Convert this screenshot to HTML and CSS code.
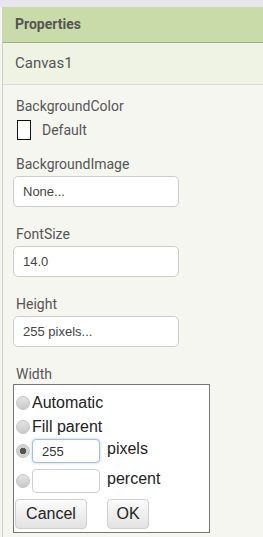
FILE: index.html
```html
<!DOCTYPE html>
<html lang="en">
<head>
    <meta charset="UTF-8">
    <meta name="viewport" content="width=device-width, initial-scale=1.0">
    <title>Properties</title>
    <link rel="stylesheet" href="styles.css">
</head>
<body>
    <div class="topbar"></div>
    <div class="panel">
        <div class="panel-head">Properties</div>
        <div class="component-name">Canvas1</div>
        <div class="props">
            <div class="prop prop-color">
                <div class="prop-label">BackgroundColor</div>
                <div class="color-row">
                    <span class="swatch"></span>
                    <span class="color-name">Default</span>
                </div>
            </div>
            <div class="prop">
                <div class="prop-label">BackgroundImage</div>
                <div class="field">None...</div>
            </div>
            <div class="prop">
                <div class="prop-label">FontSize</div>
                <div class="field">14.0</div>
            </div>
            <div class="prop">
                <div class="prop-label">Height</div>
                <div class="field">255 pixels...</div>
            </div>
            <div class="prop prop-width">
                <div class="prop-label">Width</div>
                <div class="popup">
                    <label class="opt"><input type="radio" name="width"> Automatic</label>
                    <label class="opt"><input type="radio" name="width"> Fill parent</label>
                    <div class="opt opt-input">
                        <input type="radio" name="width" checked>
                        <input type="text" class="num focused" value="255">
                        <span>pixels</span>
                    </div>
                    <div class="opt opt-input">
                        <input type="radio" name="width">
                        <input type="text" class="num" value="">
                        <span>percent</span>
                    </div>
                    <div class="buttons">
                        <button class="btn btn-cancel">Cancel</button>
                        <button class="btn btn-ok">OK</button>
                    </div>
                </div>
            </div>
            <div class="color-row hidden-row">
                <span class="checkbox"></span>
                <span class="color-name">Visible</span>
            </div>
        </div>
    </div>
</body>
</html>
```

FILE: styles.css
```css
body {
    margin: 0;
    background-color: #f6f6f1;
    font-family: Roboto, "Liberation Sans", sans-serif;
    overflow: hidden;
}
.topbar {
    height: 7px;
    background-color: #e7e6ec;
}
.panel {
    margin-left: 2px;
    border-left: 1px solid #cfcfc8;
    min-height: 600px;
}
.panel-head {
    height: 35px;
    line-height: 35px;
    padding-left: 12px;
    background-color: #c9dba9;
    border-bottom: 1px solid #9db085;
    color: #555;
    font-weight: bold;
    font-size: 14px;
}
.component-name {
    height: 41px;
    line-height: 40px;
    padding-left: 12px;
    background-color: #eff3e3;
    border-bottom: 1px solid #dcdfcd;
    color: #555;
    font-size: 15px;
}
.props {
    padding: 12px 0 0 10px;
}
.prop {
    margin-bottom: 18px;
}
.prop-label {
    height: 18px;
    line-height: 18px;
    padding-left: 3px;
    margin-bottom: 3px;
    color: #555;
    font-size: 14px;
}
.prop-color {
    margin-bottom: 15px;
}
.prop-color .prop-label {
    margin-bottom: 5px;
}
.color-row {
    display: flex;
    align-items: center;
    height: 20px;
    padding-left: 4px;
}
.swatch {
    width: 12px;
    height: 18px;
    border: 1px solid #111;
    background-color: #fff;
}
.color-name {
    margin-left: 11px;
    color: #555;
    font-size: 14px;
}
.field {
    width: 155px;
    height: 29px;
    line-height: 29px;
    padding-left: 9px;
    border: 1px solid #cccccc;
    border-radius: 5px;
    background-color: #fff;
    color: #444;
    font-family: "Liberation Sans", Arial, sans-serif;
    font-size: 13px;
}
.prop-width {
    margin-bottom: 0;
}
.prop-width .prop-label {
    margin-top: 1px;
    margin-bottom: 1px;
}
.popup {
    width: 193px;
    padding: 6px 0 3px 2px;
    border: 1px solid #777;
    background-color: #fff;
    font-family: "Liberation Sans", Arial, sans-serif;
    font-size: 16px;
    color: #222;
}
.opt {
    display: flex;
    align-items: center;
    height: 24px;
}
.opt-input {
    margin-bottom: 6px;
}
.opt input[type="radio"] {
    appearance: none;
    -webkit-appearance: none;
    width: 14px;
    height: 14px;
    margin: 0 2px 0 0;
    border: 1px solid #c4c4c4;
    border-radius: 50%;
    background: linear-gradient(#e4e4e4, #c9c9c9);
    box-sizing: border-box;
    flex: none;
}
.opt input[type="radio"]:checked {
    background: radial-gradient(circle, #555 0, #555 3px, #cfcfcf 3.5px, #dadada 100%);
}
.num {
    width: 68px;
    height: 24px;
    box-sizing: border-box;
    margin: 0;
    padding: 0 0 0 9px;
    border: 1px solid #cfcfcf;
    border-radius: 4px;
    font-family: "Liberation Sans", Arial, sans-serif;
    font-size: 13px;
    color: #333;
    outline: none;
}
.num.focused {
    border-color: #9ec0e8;
    box-shadow: 0 0 3px #a9cdf3;
}
.opt span {
    margin-left: 7px;
    margin-top: -4px;
}
.buttons {
    display: flex;
    gap: 20px;
}
.btn {
    height: 30px;
    margin: 0;
    padding: 0;
    border: 1px solid #cfcfcf;
    border-radius: 4px;
    background: linear-gradient(#fbfbfb, #e2e2e2);
    font-family: "Liberation Sans", Arial, sans-serif;
    font-size: 16px;
    color: #222;
}
.btn-cancel {
    width: 72px;
    margin-left: -1px;
}
.btn-ok {
    width: 42px;
}
.hidden-row {
    margin-top: 1px;
    padding-left: 3px;
}
.checkbox {
    width: 15px;
    height: 15px;
    background-color: #111;
}
```
